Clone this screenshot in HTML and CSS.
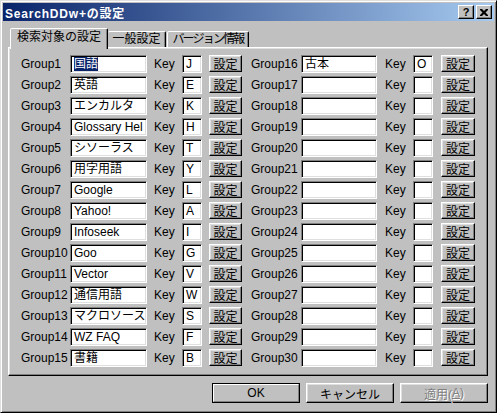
FILE: index.html
```html
<!DOCTYPE html>
<html lang="ja">
<head>
<meta charset="utf-8">
<title>SearchDDw+の設定</title>
<link rel="stylesheet" href="styles.css">
</head>
<body>
<div class="window">
  <div class="titlebar">
    <span class="title">SearchDDw+の設定</span>
    <div class="tb-btns">
      <span class="tb-btn help">?</span>
      <span class="tb-btn close"><svg width="8" height="7" viewBox="0 0 8 7"><path d="M0 0h2l2 2 2-2h2v1l-2.5 2.5L8 6v1H6L4 5 2 7H0V6l2.5-2.5L0 1z" fill="#000"/></svg></span>
    </div>
  </div>
  <div class="tabs">
    <div class="tab active">検索対象の設定</div>
    <div class="tab t2">一般設定</div>
    <div class="tab t3">バージョン情報</div>
  </div>
  <div class="panel">
    <div class="col left">
      <div class="row"><span class="lbl">Group1</span><div class="edit name"><span class="sel">国語</span></div><span class="key">Key</span><div class="edit kin">J</div><div class="btn set">設定</div></div>
      <div class="row"><span class="lbl">Group2</span><div class="edit name">英語</div><span class="key">Key</span><div class="edit kin">E</div><div class="btn set">設定</div></div>
      <div class="row"><span class="lbl">Group3</span><div class="edit name">エンカルタ</div><span class="key">Key</span><div class="edit kin">K</div><div class="btn set">設定</div></div>
      <div class="row"><span class="lbl">Group4</span><div class="edit name">Glossary Hel</div><span class="key">Key</span><div class="edit kin">H</div><div class="btn set">設定</div></div>
      <div class="row"><span class="lbl">Group5</span><div class="edit name">シソーラス</div><span class="key">Key</span><div class="edit kin">T</div><div class="btn set">設定</div></div>
      <div class="row"><span class="lbl">Group6</span><div class="edit name">用字用語</div><span class="key">Key</span><div class="edit kin">Y</div><div class="btn set">設定</div></div>
      <div class="row"><span class="lbl">Group7</span><div class="edit name">Google</div><span class="key">Key</span><div class="edit kin">L</div><div class="btn set">設定</div></div>
      <div class="row"><span class="lbl">Group8</span><div class="edit name">Yahoo!</div><span class="key">Key</span><div class="edit kin">A</div><div class="btn set">設定</div></div>
      <div class="row"><span class="lbl">Group9</span><div class="edit name">Infoseek</div><span class="key">Key</span><div class="edit kin">I</div><div class="btn set">設定</div></div>
      <div class="row"><span class="lbl">Group10</span><div class="edit name">Goo</div><span class="key">Key</span><div class="edit kin">G</div><div class="btn set">設定</div></div>
      <div class="row"><span class="lbl">Group11</span><div class="edit name">Vector</div><span class="key">Key</span><div class="edit kin">V</div><div class="btn set">設定</div></div>
      <div class="row"><span class="lbl">Group12</span><div class="edit name">通信用語</div><span class="key">Key</span><div class="edit kin">W</div><div class="btn set">設定</div></div>
      <div class="row"><span class="lbl">Group13</span><div class="edit name">マクロソース</div><span class="key">Key</span><div class="edit kin">S</div><div class="btn set">設定</div></div>
      <div class="row"><span class="lbl">Group14</span><div class="edit name">WZ FAQ</div><span class="key">Key</span><div class="edit kin">F</div><div class="btn set">設定</div></div>
      <div class="row"><span class="lbl">Group15</span><div class="edit name">書籍</div><span class="key">Key</span><div class="edit kin">B</div><div class="btn set">設定</div></div>
    </div>
    <div class="col right">
      <div class="row"><span class="lbl">Group16</span><div class="edit name">古本</div><span class="key">Key</span><div class="edit kin">O</div><div class="btn set">設定</div></div>
      <div class="row"><span class="lbl">Group17</span><div class="edit name"></div><span class="key">Key</span><div class="edit kin"></div><div class="btn set">設定</div></div>
      <div class="row"><span class="lbl">Group18</span><div class="edit name"></div><span class="key">Key</span><div class="edit kin"></div><div class="btn set">設定</div></div>
      <div class="row"><span class="lbl">Group19</span><div class="edit name"></div><span class="key">Key</span><div class="edit kin"></div><div class="btn set">設定</div></div>
      <div class="row"><span class="lbl">Group20</span><div class="edit name"></div><span class="key">Key</span><div class="edit kin"></div><div class="btn set">設定</div></div>
      <div class="row"><span class="lbl">Group21</span><div class="edit name"></div><span class="key">Key</span><div class="edit kin"></div><div class="btn set">設定</div></div>
      <div class="row"><span class="lbl">Group22</span><div class="edit name"></div><span class="key">Key</span><div class="edit kin"></div><div class="btn set">設定</div></div>
      <div class="row"><span class="lbl">Group23</span><div class="edit name"></div><span class="key">Key</span><div class="edit kin"></div><div class="btn set">設定</div></div>
      <div class="row"><span class="lbl">Group24</span><div class="edit name"></div><span class="key">Key</span><div class="edit kin"></div><div class="btn set">設定</div></div>
      <div class="row"><span class="lbl">Group25</span><div class="edit name"></div><span class="key">Key</span><div class="edit kin"></div><div class="btn set">設定</div></div>
      <div class="row"><span class="lbl">Group26</span><div class="edit name"></div><span class="key">Key</span><div class="edit kin"></div><div class="btn set">設定</div></div>
      <div class="row"><span class="lbl">Group27</span><div class="edit name"></div><span class="key">Key</span><div class="edit kin"></div><div class="btn set">設定</div></div>
      <div class="row"><span class="lbl">Group28</span><div class="edit name"></div><span class="key">Key</span><div class="edit kin"></div><div class="btn set">設定</div></div>
      <div class="row"><span class="lbl">Group29</span><div class="edit name"></div><span class="key">Key</span><div class="edit kin"></div><div class="btn set">設定</div></div>
      <div class="row"><span class="lbl">Group30</span><div class="edit name"></div><span class="key">Key</span><div class="edit kin"></div><div class="btn set">設定</div></div>
    </div>
  </div>
  <div class="footer">
    <div class="btn big default"><span>OK</span></div>
    <div class="btn big">キャンセル</div>
    <div class="btn big disabled">適用(<u>A</u>)</div>
  </div>
</div>
</body>
</html>
```
FILE: styles.css
```css
html, body {
  margin: 0;
  padding: 0;
  background: #c0c0c0;
}
body {
  font-family: "Liberation Sans", "Noto Sans CJK JP", sans-serif;
  font-size: 12px;
  color: #000;
}
.window {
  width: 497px;
  height: 413px;
  box-sizing: border-box;
  background: #c0c0c0;
  border: 1px solid;
  border-color: #dfdfdf #000 #000 #dfdfdf;
  box-shadow: inset 1px 1px #fff, inset -1px -1px #808080;
  padding: 2px;
}
.titlebar {
  height: 18px;
  display: flex;
  align-items: center;
  justify-content: space-between;
  background: linear-gradient(to right, #0a246a, #a6caf0);
  color: #fff;
  font-weight: bold;
  font-size: 12px;
}
.title {
  padding-left: 2px;
  letter-spacing: 0.8px;
}
.tb-btns {
  display: flex;
  gap: 2px;
  padding-right: 2px;
}
.tb-btn {
  width: 16px;
  height: 14px;
  box-sizing: border-box;
  background: #c0c0c0;
  border: 1px solid;
  border-color: #fff #000 #000 #fff;
  box-shadow: inset -1px -1px #808080;
  display: flex;
  align-items: center;
  justify-content: center;
  color: #000;
  font-size: 11px;
  font-weight: bold;
  line-height: 1;
}
.tabs {
  display: flex;
  align-items: flex-end;
  height: 19px;
  margin: 7px 0 0 7px;
  position: relative;
  z-index: 1;
}
.tab {
  box-sizing: border-box;
  height: 16px;
  border: 1px solid;
  border-bottom: none;
  border-color: #fff #000 transparent #fff;
  box-shadow: inset -1px 0 #808080;
  border-top-left-radius: 2px;
  border-top-right-radius: 2px;
  text-align: center;
  line-height: 14px;
  background: #c0c0c0;
  white-space: nowrap;
  overflow: hidden;
}
.tab.active {
  width: 98px;
  height: 21px;
  margin-bottom: -2px;
  line-height: 17px;
}
.tab.t2 {
  width: 58px;
  border-left: none;
}
.tab.t3 {
  width: 82px;
  margin-left: 1px;
  letter-spacing: -1.8px;
}
.panel {
  margin-left: 5px;
  width: 480px;
  height: 329px;
  box-sizing: border-box;
  border: 1px solid;
  border-color: #fff #000 #000 #fff;
  box-shadow: inset -1px -1px #808080, inset 1px 1px #dfdfdf;
  padding: 5px 0 0 12px;
  display: flex;
  gap: 9px;
}
.col {
  display: flex;
  flex-direction: column;
}
.row {
  display: flex;
  align-items: center;
  height: 21px;
  white-space: nowrap;
}
.lbl {
  width: 49px;
}
.right .lbl {
  width: 50px;
}
.edit {
  box-sizing: border-box;
  height: 18px;
  background: #fff;
  border: 1px solid;
  border-color: #808080 #fff #fff #808080;
  box-shadow: inset 1px 1px #000, inset -1px -1px #dfdfdf;
  padding: 1px 0 0 3px;
  line-height: 15px;
  overflow: hidden;
}
.name {
  width: 77px;
}
.right .name {
  width: 76px;
}
.key {
  margin-left: 7px;
  width: 28px;
}
.right .key {
  margin-left: 8px;
}
.kin {
  width: 20px;
}
.sel {
  background: #0a246a;
  color: #fff;
}
.btn {
  box-sizing: border-box;
  background: #c0c0c0;
  border: 1px solid;
  border-color: #fff #000 #000 #fff;
  box-shadow: inset -1px -1px #808080, inset 1px 1px #dfdfdf;
  display: flex;
  align-items: center;
  justify-content: center;
}
.set {
  margin-left: 7px;
  width: 33px;
  height: 17px;
}
.right .set {
  margin-left: 8px;
  width: 34px;
}
.footer {
  display: flex;
  justify-content: flex-end;
  gap: 6px;
  margin: 7px 6px 0 0;
}
.big {
  width: 88px;
  height: 20px;
}
.default {
  border: 1px solid #000;
  box-shadow: none;
  padding: 0;
}
.default span {
  width: 100%;
  height: 100%;
  box-sizing: border-box;
  border: 1px solid;
  border-color: #fff #808080 #808080 #fff;
  display: flex;
  align-items: center;
  justify-content: center;
}
.disabled {
  color: #808080;
  text-shadow: 1px 1px #fff;
}
```
